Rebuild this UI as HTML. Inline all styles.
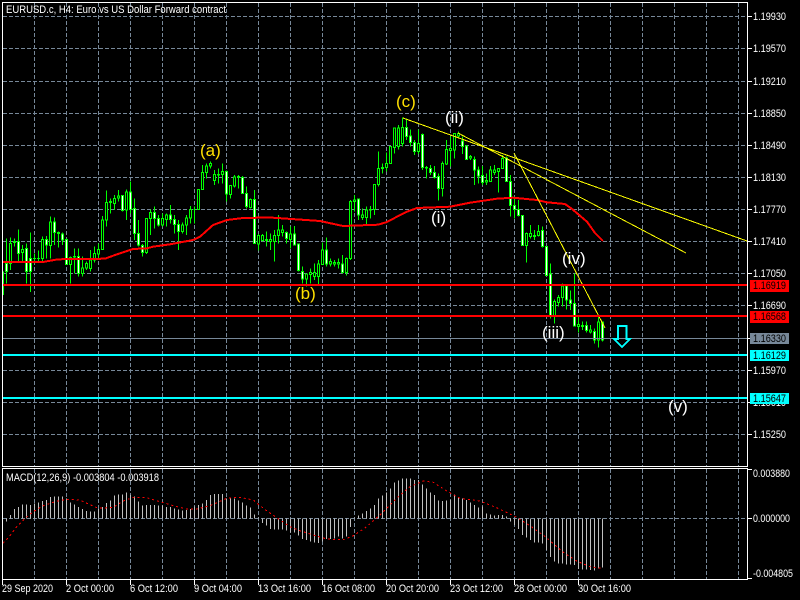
<!DOCTYPE html>
<html>
<head>
<meta charset="utf-8">
<title>EURUSD.c, H4</title>
<style>
html,body{margin:0;padding:0;background:#000;width:800px;height:600px;overflow:hidden}
svg{display:block;font-family:"Liberation Sans",sans-serif}
text{fill:#fff;font-size:11px}
.c{shape-rendering:crispEdges}
.n *{vector-effect:non-scaling-stroke}
text.l{font-size:17px}
</style>
</head>
<body>
<svg width="800" height="600" viewBox="0 0 800 600" xmlns="http://www.w3.org/2000/svg">
<rect width="800" height="600" fill="#000"/>
<!-- grid -->
<g class="c" stroke="#778899" stroke-width="1" stroke-dasharray="4 2" fill="none">
<path d="M3 16.5H747M3 48.5H747M3 81.5H747M3 113.5H747M3 145.5H747M3 177.5H747M3 209.5H747M3 241.5H747M3 273.5H747M3 305.5H747M3 370.5H747M3 402.5H747M3 434.5H747"/>
<path d="M34.5 3V466M66.5 3V466M98.5 3V466M130.5 3V466M162.5 3V466M194.5 3V466M226.5 3V466M258.5 3V466M290.5 3V466M322.5 3V466M354.5 3V466M386.5 3V466M418.5 3V466M450.5 3V466M482.5 3V466M514.5 3V466M546.5 3V466M578.5 3V466M610.5 3V466M642.5 3V466M674.5 3V466M706.5 3V466M738.5 3V466"/>
<path d="M34.5 469V579M66.5 469V579M98.5 469V579M130.5 469V579M162.5 469V579M194.5 469V579M226.5 469V579M258.5 469V579M290.5 469V579M322.5 469V579M354.5 469V579M386.5 469V579M418.5 469V579M450.5 469V579M482.5 469V579M514.5 469V579M546.5 469V579M578.5 469V579M610.5 469V579M642.5 469V579M674.5 469V579M706.5 469V579M738.5 469V579"/>
<path d="M3 518.5H747"/>
</g>
<!-- candles: zoom1 -->
<g class="c n" transform="translate(0,130) scale(1,.33333)">
<path fill="none" stroke="#00ff00" d="M3.5 425V495M6.5 325V460M10.5 322V420M14.5 325V350M18.5 298V395M22.5 345V395M26.5 340V460M30.5 307V486M34.5 370V400M38.5 362V395M42.5 320V395M46.5 318V385M50.5 260V385M54.5 262V345M58.5 305V352M62.5 308V345M66.5 325V405M70.5 380V460M74.5 355V430M78.5 355V440M82.5 380V440M86.5 395V420M90.5 360V425M94.5 350V398M98.5 340V390M102.5 258V358M106.5 182V290M110.5 205V250M114.5 195V240M118.5 180V215M122.5 195V245M126.5 178V270M130.5 155V250M134.5 205V330M138.5 270V350M142.5 342V380M146.5 265V372M150.5 238V315M154.5 230V295M158.5 255V290M162.5 250V290M166.5 250V290M170.5 225V280M174.5 255V310M178.5 270V360M182.5 278V310M186.5 255V315M190.5 228V280M194.5 230V280M198.5 178V238M202.5 105V178M206.5 100V145M210.5 94V115M214.5 120V165M218.5 115V160M222.5 100V160M226.5 122V215M230.5 165V205M234.5 135V172M238.5 135V175M242.5 138V190M246.5 170V235M250.5 205V235M254.5 180V342M258.5 312V362M262.5 312V335M266.5 305V350"/>
<path fill="#000" stroke="#00ff00" d="M9.5 340h2V400h-2zM21.5 358h2V368h-2zM41.5 328h2V385h-2zM49.5 276h2V347h-2zM69.5 382h2V403h-2zM81.5 414h2V430h-2zM85.5 400h2V414h-2zM89.5 390h2V415h-2zM93.5 370h2V390h-2zM97.5 358h2V372h-2zM101.5 270h2V358h-2zM105.5 218h2V270h-2zM113.5 205h2V220h-2zM117.5 198h2V204h-2zM125.5 186h2V240h-2zM145.5 265h2V368h-2zM149.5 247h2V266h-2zM161.5 266h2V285h-2zM165.5 255h2V268h-2zM181.5 285h2V305h-2zM185.5 264h2V285h-2zM189.5 238h2V264h-2zM197.5 178h2V238h-2zM201.5 127h2V178h-2zM205.5 108h2V128h-2zM209.5 100h2V108h-2zM213.5 134h2V152h-2zM221.5 124h2V134h-2zM229.5 166h2V193h-2zM233.5 141h2V168h-2zM249.5 208h2V232h-2zM257.5 316h2V342h-2zM261.5 316h2V332h-2z"/>
<path fill="#fff" stroke="#00ff00" d="M5.5 400h2V425h-2zM17.5 335h2V370h-2zM25.5 355h2V425h-2zM29.5 385h2V425h-2zM45.5 328h2V345h-2zM53.5 276h2V308h-2zM61.5 312h2V330h-2zM65.5 328h2V403h-2zM77.5 380h2V430h-2zM121.5 196h2V241h-2zM129.5 186h2V238h-2zM133.5 235h2V310h-2zM137.5 310h2V345h-2zM141.5 347h2V368h-2zM153.5 247h2V266h-2zM157.5 265h2V285h-2zM169.5 255h2V268h-2zM173.5 268h2V283h-2zM177.5 283h2V305h-2zM225.5 124h2V192h-2zM241.5 142h2V190h-2zM245.5 190h2V230h-2zM253.5 208h2V340h-2z"/>
<path fill="#000" stroke="#00ff00" d="M13.5 335h2V337h-2zM33.5 385h2V386h-2zM37.5 385h2V386h-2zM57.5 308h2V310h-2zM73.5 380h2V381h-2zM109.5 215h2V218h-2zM193.5 238h2V238h-2zM217.5 134h2V135h-2zM237.5 140h2V141h-2zM265.5 328h2V332h-2z"/>
</g>
<!-- candles: zoom2 -->
<g class="c n" transform="translate(0,90) scale(1,.33333)">
<path fill="none" stroke="#00ff00" d="M270.5 430V480M274.5 420V515M278.5 375V460M282.5 405V440M286.5 425V460M290.5 410V475M294.5 408V465M298.5 462V545M302.5 530V580M306.5 550V590M310.5 535V580M314.5 520V570M318.5 510V582M322.5 458V524M326.5 442V530M330.5 505V530M334.5 510V530M338.5 505V535M342.5 495V550M346.5 502V556M350.5 330V510M354.5 315V365M358.5 325V390M362.5 355V390M366.5 350V402M370.5 348V385M374.5 282V375M378.5 185V290M382.5 220V250M386.5 188V245M390.5 168V222M394.5 112V190M398.5 105V178M402.5 82V170M406.5 85V150M410.5 118V170M414.5 150V195M418.5 118V192M422.5 130V240M426.5 228V265M430.5 225V255M434.5 228V265M438.5 250V332M442.5 215V320M446.5 150V225M450.5 140V230M454.5 130V205M458.5 125V145M462.5 140V192M466.5 165V210M470.5 195V210M474.5 200V285M478.5 230V280M482.5 228V285M486.5 250V285M490.5 228V275M494.5 225V255M498.5 235V308M502.5 195V235M506.5 200V275M510.5 255V380M514.5 320V385M518.5 330V380M522.5 375V468M526.5 428V518M530.5 405V445M534.5 420V450M538.5 405V440"/>
<path fill="#000" stroke="#00ff00" d="M269.5 448h2V455h-2zM273.5 437h2V455h-2zM277.5 420h2V437h-2zM281.5 420h2V428h-2zM289.5 432h2V448h-2zM305.5 552h2V567h-2zM309.5 547h2V553h-2zM313.5 547h2V560h-2zM317.5 522h2V560h-2zM321.5 480h2V524h-2zM329.5 514h2V522h-2zM333.5 518h2V522h-2zM337.5 518h2V522h-2zM345.5 505h2V548h-2zM349.5 334h2V505h-2zM353.5 330h2V334h-2zM361.5 375h2V382h-2zM365.5 360h2V382h-2zM369.5 358h2V360h-2zM373.5 284h2V358h-2zM377.5 236h2V284h-2zM381.5 232h2V236h-2zM385.5 220h2V232h-2zM389.5 170h2V220h-2zM393.5 114h2V172h-2zM397.5 114h2V170h-2zM401.5 112h2V160h-2zM417.5 160h2V185h-2zM425.5 232h2V234h-2zM441.5 220h2V296h-2zM445.5 178h2V222h-2zM449.5 175h2V182h-2zM453.5 130h2V180h-2zM457.5 130h2V138h-2zM469.5 200h2V204h-2zM485.5 272h2V276h-2zM489.5 240h2V275h-2zM493.5 240h2V248h-2zM497.5 235h2V245h-2zM501.5 205h2V235h-2zM525.5 430h2V466h-2zM529.5 430h2V440h-2zM533.5 436h2V440h-2zM537.5 425h2V437h-2z"/>
<path fill="#fff" stroke="#00ff00" d="M285.5 428h2V446h-2zM293.5 432h2V465h-2zM297.5 462h2V542h-2zM301.5 545h2V567h-2zM325.5 480h2V522h-2zM341.5 522h2V548h-2zM357.5 327h2V375h-2zM405.5 112h2V140h-2zM409.5 138h2V158h-2zM413.5 158h2V185h-2zM421.5 134h2V232h-2zM429.5 236h2V248h-2zM433.5 248h2V262h-2zM437.5 260h2V296h-2zM461.5 153h2V170h-2zM465.5 168h2V208h-2zM473.5 208h2V240h-2zM477.5 240h2V258h-2zM481.5 256h2V278h-2zM505.5 204h2V275h-2zM509.5 275h2V346h-2zM513.5 346h2V358h-2zM517.5 358h2V376h-2zM521.5 376h2V466h-2z"/>
</g>
<!-- candles: zoom3 -->
<g class="c n" transform="translate(0,150) scale(1,.33333)">
<path fill="none" stroke="#00ff00" d="M542.5 230V292M546.5 288V378M550.5 340V505M554.5 448V520M558.5 435V470M562.5 400V470M566.5 408V478M570.5 422V480M574.5 370V530M578.5 500V548M582.5 515V540M586.5 515V548M590.5 525V550M594.5 535V580M598.5 500V592M602.5 515V575"/>
<path fill="#000" stroke="#00ff00" d="M553.5 455h2V498h-2zM557.5 442h2V458h-2zM561.5 408h2V442h-2zM577.5 524h2V530h-2zM581.5 526h2V530h-2zM589.5 540h2V546h-2zM597.5 516h2V570h-2z"/>
<path fill="#fff" stroke="#00ff00" d="M541.5 242h2V290h-2zM545.5 290h2V376h-2zM549.5 372h2V498h-2zM565.5 408h2V450h-2zM569.5 450h2V460h-2zM573.5 460h2V528h-2zM585.5 526h2V542h-2zM593.5 545h2V570h-2zM601.5 516h2V570h-2z"/>
</g>
<!-- MA -->
<polyline class="c" fill="none" stroke="#ff0000" stroke-width="2" points="3,262 43,262 58,259.3 105,258.7 115,255 125,251.7 133,249 147,248.3 153,246.7 170,244.3 193,240 200,236.7 213,225 227,220 243,218 270,217.5 320,221 343,226 378,224.7 387,222 397,216.7 407,211.7 417,208 450,206.7 470,202.7 497,198.7 513,197.7 537,200 547,202.3 565,204 572,209 587,221.7 595,233 603,241"/>
<!-- yellow lines -->
<g class="c" fill="none" stroke="#ffff00" stroke-width="1">
<path d="M403 118L747 241"/>
<path d="M458 133L686 253"/>
<path d="M514 153L605 328"/>
</g>
<!-- horizontal levels -->
<g class="c" fill="none">
<path stroke="#ff0000" stroke-width="2" d="M3 285H748M3 316H748"/>
<path stroke="#778899" stroke-width="1" d="M3 338.5H748"/>
<path stroke="#00ffff" stroke-width="2" d="M3 355H748M3 398H748"/>
</g>
<!-- arrow -->
<path class="c" fill="none" stroke="#00ffff" stroke-width="2" d="M618 326H626.5V339H630L622 347L614 339H618Z"/>
<!-- wave labels -->
<g>
<text class="l" x="200" y="156" style="fill:#ffe000">(a)</text>
<text class="l" x="295" y="299" style="fill:#ffe000">(b)</text>
<text class="l" x="396" y="107" style="fill:#ffe000">(c)</text>
<text class="l" x="445" y="123">(ii)</text>
<text class="l" x="431" y="223">(i)</text>
<text class="l" x="542" y="338">(iii)</text>
<text class="l" x="562" y="264">(iv)</text>
<text class="l" x="668" y="412">(v)</text>
</g>
<!-- MACD histogram -->
<g class="c n" transform="translate(0,465) scale(1,.33333)">
<path fill="none" stroke="#c0c0c0" d="M6.5 160V170M10.5 160V150M14.5 160V132M18.5 160V126M22.5 160V118M26.5 160V118M30.5 160V120M34.5 160V116M38.5 160V112M42.5 160V108M46.5 160V105M50.5 160V96M54.5 160V94M58.5 160V94M62.5 160V94M66.5 160V100M70.5 160V112M74.5 160V118M78.5 160V126M82.5 160V132M86.5 160V138M90.5 160V140M94.5 160V140M98.5 160V132M102.5 160V126M106.5 160V114M110.5 160V106M114.5 160V92M118.5 160V88M122.5 160V88M126.5 160V82M130.5 160V90M134.5 160V95M138.5 160V110M142.5 160V122M146.5 160V120M150.5 160V120M154.5 160V120M158.5 160V122M162.5 160V122M166.5 160V126M170.5 160V126M174.5 160V130M178.5 160V134M182.5 160V136M186.5 160V135M190.5 160V132M194.5 160V124M198.5 160V120M202.5 160V115M206.5 160V105M210.5 160V90M214.5 160V87M218.5 160V87M222.5 160V87M226.5 160V100M230.5 160V100M234.5 160V100M238.5 160V107M242.5 160V113M246.5 160V122M250.5 160V127M254.5 160V148M258.5 160V158M262.5 160V174M266.5 160V182M270.5 160V192M274.5 160V194M278.5 160V194M282.5 160V194M286.5 160V196M290.5 160V202M294.5 160V202M298.5 160V212M302.5 160V222M306.5 160V225M310.5 160V230M314.5 160V232M318.5 160V234M322.5 160V230M326.5 160V222M330.5 160V222M334.5 160V220M338.5 160V215M342.5 160V220M346.5 160V214M350.5 160V186M354.5 160V158M358.5 160V152M362.5 160V146M366.5 160V138M370.5 160V130M374.5 160V120M378.5 160V100M382.5 160V92M386.5 160V82M390.5 160V70M394.5 160V52M398.5 160V46M402.5 160V40M406.5 160V40M410.5 160V40M414.5 160V45M418.5 160V45M422.5 160V58M426.5 160V70M430.5 160V82M434.5 160V90M438.5 160V106M442.5 160V108M446.5 160V106M450.5 160V105M454.5 160V88M458.5 160V96M462.5 160V100M466.5 160V105M470.5 160V112M474.5 160V120M478.5 160V128M482.5 160V124M486.5 160V145M490.5 160V148M494.5 160V152M498.5 160V150M502.5 160V150M506.5 160V154M510.5 160V170M514.5 160V180M518.5 160V192M522.5 160V210M526.5 160V218M530.5 160V225M534.5 160V232M538.5 160V233M542.5 160V236M546.5 160V255M550.5 160V276M554.5 160V290M558.5 160V295M562.5 160V296M566.5 160V298M570.5 160V298M574.5 160V300M578.5 160V312M582.5 160V314M586.5 160V314M590.5 160V315M594.5 160V316M598.5 160V310M602.5 160V308"/>
</g>
<!-- signal -->
<g class="c" fill="none" stroke="#ff0000" stroke-width="1" stroke-dasharray="2 3">
<polyline points="3,543.3 10,535.7 16.7,526.7 25,518.3 33.3,511.7 43.3,505.7 55,501.7 66.7,499.3 80,500 88.3,504 98.3,508.3 113.3,507.3 123.3,501 133.3,497.3 146.7,497.7 160,501.7 173.3,505.7 186.7,509 196.7,509 210,505.7 226.7,498.3 240,497.3 253.3,500 263.3,508.3 276.7,517.7 290,526.7 300,530.7 313.3,535 326.7,539 343.3,539.7 353.3,535.7 366.7,526.7 380,515 396.7,498.3 410,486.7 423.3,481 433.3,482.3 446.7,491 460,498.3 480,501 496.7,507.7 516.7,517.3 530,525.7 546.7,537.7 563.3,552.3 576.7,561 590,566.7 601.7,568.3"/>
</g>
<!-- frame -->
<g class="c" fill="none" stroke="#fff" stroke-width="1">
<path d="M2.5 2.5H747.5V466.5H2.5Z"/>
<path d="M2.5 468.5H747.5V579.5H2.5Z"/>
<path d="M748 16.5h4M748 48.5h4M748 81.5h4M748 113.5h4M748 145.5h4M748 177.5h4M748 209.5h4M748 241.5h4M748 273.5h4M748 305.5h4M748 338.5h4M748 370.5h4M748 402.5h4M748 434.5h4M748 469.5h4M748 518.5h4M748 578.5h4"/>
<path d="M2.5 580V585M66.5 580V585M130.5 580V585M194.5 580V585M258.5 580V585M322.5 580V585M386.5 580V585M450.5 580V585M514.5 580V585M578.5 580V585"/>
</g>
<!-- title -->
<text x="6" y="13" textLength="220" lengthAdjust="spacingAndGlyphs">EURUSD.c, H4:  Euro vs US Dollar Forward contract</text>
<text x="6" y="481" textLength="153" lengthAdjust="spacingAndGlyphs">MACD(12,26,9) -0.003804 -0.003918</text>
<!-- price axis -->
<g>
<text x="753" y="20" textLength="33" lengthAdjust="spacingAndGlyphs">1.19930</text>
<text x="753" y="52" textLength="33" lengthAdjust="spacingAndGlyphs">1.19570</text>
<text x="753" y="85" textLength="33" lengthAdjust="spacingAndGlyphs">1.19210</text>
<text x="753" y="117" textLength="33" lengthAdjust="spacingAndGlyphs">1.18850</text>
<text x="753" y="149" textLength="33" lengthAdjust="spacingAndGlyphs">1.18490</text>
<text x="753" y="181" textLength="33" lengthAdjust="spacingAndGlyphs">1.18130</text>
<text x="753" y="213" textLength="33" lengthAdjust="spacingAndGlyphs">1.17770</text>
<text x="753" y="245" textLength="33" lengthAdjust="spacingAndGlyphs">1.17410</text>
<text x="753" y="277" textLength="33" lengthAdjust="spacingAndGlyphs">1.17050</text>
<text x="753" y="309" textLength="33" lengthAdjust="spacingAndGlyphs">1.16690</text>
<text x="753" y="374" textLength="33" lengthAdjust="spacingAndGlyphs">1.15970</text>
<text x="753" y="406" textLength="33" lengthAdjust="spacingAndGlyphs">1.15610</text>
<text x="753" y="438" textLength="33" lengthAdjust="spacingAndGlyphs">1.15250</text>
<text x="753" y="477" textLength="37" lengthAdjust="spacingAndGlyphs">0.003880</text>
<text x="753" y="522" textLength="37" lengthAdjust="spacingAndGlyphs">0.000000</text>
<text x="753" y="577" textLength="40" lengthAdjust="spacingAndGlyphs">-0.004805</text>
</g>
<!-- price boxes -->
<g class="c">
<rect x="750" y="280" width="39" height="12" fill="#ff0000"/>
<rect x="750" y="311" width="39" height="12" fill="#ff0000"/>
<rect x="750" y="333" width="39" height="11" fill="#778899"/>
<rect x="750" y="350" width="39" height="11" fill="#00ffff"/>
<rect x="750" y="393" width="39" height="11" fill="#00ffff"/>
</g>
<g>
<text x="753" y="289" textLength="33" lengthAdjust="spacingAndGlyphs" style="fill:#000">1.16919</text>
<text x="753" y="320" textLength="33" lengthAdjust="spacingAndGlyphs" style="fill:#000">1.16568</text>
<text x="753" y="342" textLength="33" lengthAdjust="spacingAndGlyphs" style="fill:#000">1.16330</text>
<text x="753" y="359" textLength="33" lengthAdjust="spacingAndGlyphs" style="fill:#000">1.16129</text>
<text x="753" y="402" textLength="33" lengthAdjust="spacingAndGlyphs" style="fill:#000">1.15647</text>
</g>
<!-- time axis -->
<g>
<text x="2" y="592" textLength="51" lengthAdjust="spacingAndGlyphs">29 Sep 2020</text>
<text x="66" y="592" textLength="48" lengthAdjust="spacingAndGlyphs">2 Oct 00:00</text>
<text x="130" y="592" textLength="48" lengthAdjust="spacingAndGlyphs">6 Oct 12:00</text>
<text x="194" y="592" textLength="48" lengthAdjust="spacingAndGlyphs">9 Oct 04:00</text>
<text x="258" y="592" textLength="53" lengthAdjust="spacingAndGlyphs">13 Oct 16:00</text>
<text x="322" y="592" textLength="53" lengthAdjust="spacingAndGlyphs">16 Oct 08:00</text>
<text x="386" y="592" textLength="53" lengthAdjust="spacingAndGlyphs">20 Oct 20:00</text>
<text x="450" y="592" textLength="53" lengthAdjust="spacingAndGlyphs">23 Oct 12:00</text>
<text x="514" y="592" textLength="53" lengthAdjust="spacingAndGlyphs">28 Oct 00:00</text>
<text x="578" y="592" textLength="53" lengthAdjust="spacingAndGlyphs">30 Oct 16:00</text>
</g>
</svg>
</body>
</html>
